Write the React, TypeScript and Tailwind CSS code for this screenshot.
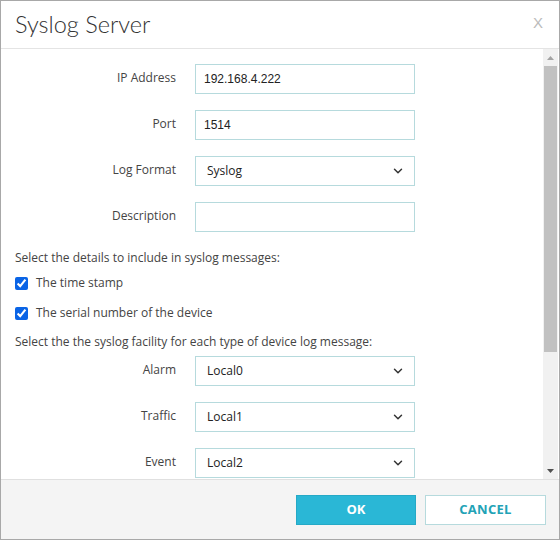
import React from "react";
import { ChevronDown } from "lucide-react";

const label = "w-[175px] shrink-0 text-right pt-[5px] text-[12px] text-[#444] [font-family:'Open_Sans',sans-serif] leading-[18px]";
const box = "w-[220px] h-[30px] border border-[#b6dadd] bg-white flex items-center pl-[8px] pr-[10px] text-[12px] text-[#222] [font-family:'Liberation_Sans',Arial,sans-serif]";

function TextRow({ name, value }: { name: string; value: string }) {
  return (
    <div className="flex items-start gap-[19px]">
      <div className={label}>{name}</div>
      <div className={box}>{value}</div>
    </div>
  );
}

function SelectRow({ name, value }: { name: string; value: string }) {
  return (
    <div className="flex items-start gap-[19px]">
      <div className={label}>{name}</div>
      <div className={box + " justify-between [font-family:'Open_Sans',sans-serif] !pl-[11px]"}>
        <span>{value}</span>
        <ChevronDown size={14} strokeWidth={2.5} className="text-[#333] -mr-[1px]" />
      </div>
    </div>
  );
}

function Check({ text }: { text: string }) {
  return (
    <div className="flex items-center gap-[8px] h-[18px]">
      <input type="checkbox" checked readOnly className="w-[13px] h-[13px] m-0 accent-[#0a64e6]" />
      <span className="text-[12px] text-[#444] [font-family:'Open_Sans',sans-serif]">{text}</span>
    </div>
  );
}

export default function App() {
  return (
    <div className="w-[560px] h-[540px] bg-white border border-[#a8a8a8] flex flex-col overflow-hidden">
      <div className="h-[48px] shrink-0 border-b border-[#e4e4e4] flex items-center justify-between pl-[14px] pr-[16px]">
        <span className="text-[23.5px] font-light text-[#333] [font-family:Lato,sans-serif] pt-[1px]">Syslog Server</span>
        <span className="text-[15px] text-[#bbb] [font-family:'Liberation_Sans',Arial,sans-serif] -mt-[2px]">X</span>
      </div>
      <div className="flex-1 flex overflow-hidden">
        <div className="flex-1 overflow-hidden pt-[15px]">
          <div className="flex flex-col gap-[16px]">
            <TextRow name="IP Address" value="192.168.4.222" />
            <TextRow name="Port" value="1514" />
            <SelectRow name="Log Format" value="Syslog" />
            <TextRow name="Description" value="" />
          </div>
          <div className="pl-[14px] mt-[17px] text-[12px] text-[#444] [font-family:'Open_Sans',sans-serif] leading-[18px]">
            Select the details to include in syslog messages:
          </div>
          <div className="pl-[14px] mt-[7px] flex flex-col gap-[12px]">
            <Check text="The time stamp" />
            <Check text="The serial number of the device" />
          </div>
          <div className="pl-[14px] mt-[11px] text-[12px] text-[#444] [font-family:'Open_Sans',sans-serif] leading-[18px]">
            Select the the syslog facility for each type of device log message:
          </div>
          <div className="mt-[5px] flex flex-col gap-[16px]">
            <SelectRow name="Alarm" value="Local0" />
            <SelectRow name="Traffic" value="Local1" />
            <SelectRow name="Event" value="Local2" />
          </div>
        </div>
        <div className="w-[15px] shrink-0 bg-[#f1f1f1] flex flex-col mr-[1px]">
          <div className="h-[17px] flex items-center justify-center">
            <svg width="7" height="4" viewBox="0 0 7 4"><path d="M3.5 0L7 4H0z" fill="#a3a3a3" /></svg>
          </div>
          <div className="h-[286px] bg-[#c1c1c1] mx-[1px]" />
          <div className="flex-1" />
          <div className="h-[17px] flex items-center justify-center">
            <svg width="7" height="4" viewBox="0 0 7 4"><path d="M0 0H7L3.5 4z" fill="#505050" /></svg>
          </div>
        </div>
      </div>
      <div className="h-[60px] shrink-0 border-t border-[#e0e0e0] bg-[#f4f4f4] flex items-center justify-end gap-[9px] pr-[13px]">
        <div className="w-[120px] h-[30px] bg-[#2ab7d6] border border-[#25a9c6] flex items-center justify-center text-white text-[13px] font-bold [font-family:'Open_Sans',sans-serif]">
          OK
        </div>
        <div className="w-[121px] h-[30px] bg-white border border-[#b6dadd] flex items-center justify-center text-[#22a2b6] text-[13px] font-bold [font-family:'Open_Sans',sans-serif] tracking-[0.3px]">
          CANCEL
        </div>
      </div>
    </div>
  );
}
